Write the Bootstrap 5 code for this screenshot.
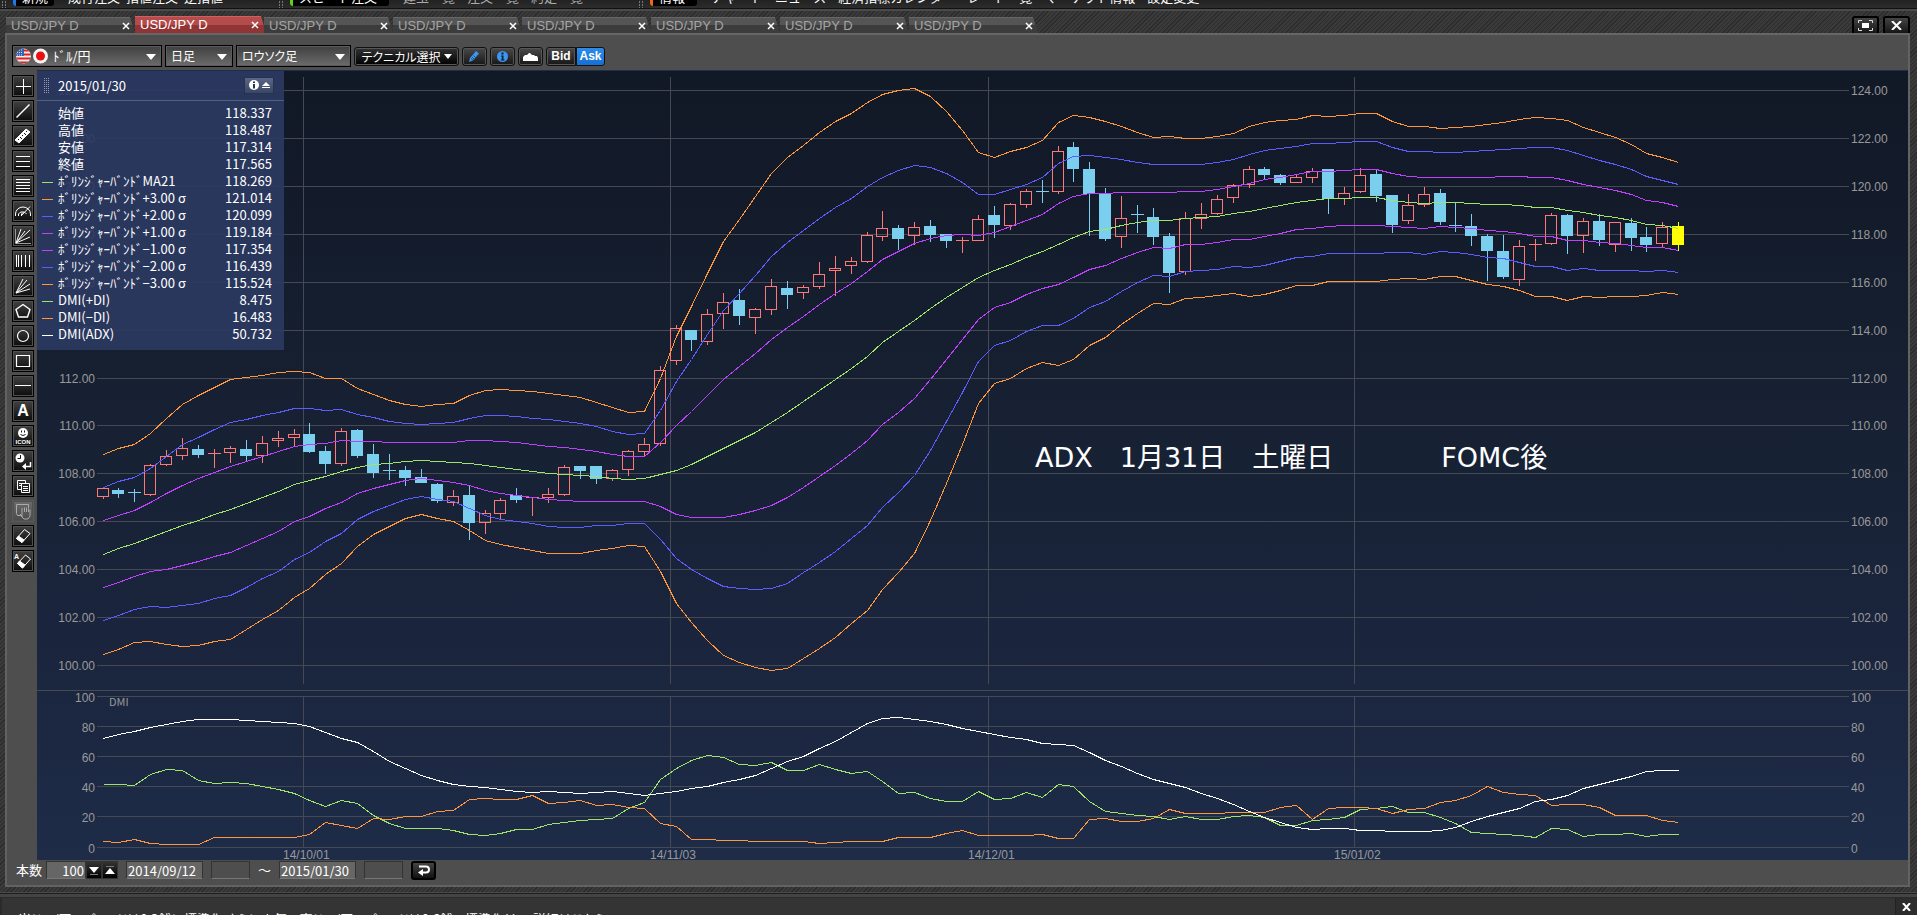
<!DOCTYPE html>
<html lang="ja">
<head>
<meta charset="utf-8">
<meta name="viewport" content="width=device-width, initial-scale=1">
<title>USD/JPY D</title>
<link href="https://cdn.jsdelivr.net/npm/bootstrap@5.3.0/dist/css/bootstrap.min.css" rel="stylesheet">
<style>
  :root { --ui: "Noto Sans CJK JP", "Liberation Sans", sans-serif; }
  body { font-family: var(--ui); font-size: 13px; line-height: 17px; color: #fff; background: #333; min-height: 600px; }
  .hatch { background: repeating-linear-gradient(135deg, #2c2c2c 0 1px, #3a3a3a 1px 3px); }
  .stretch { min-height: 0; }
  .groove { height: 3px; background: #4a4a4a; border-top: 1px solid #111; }

  .ticker { height: 8px; background: linear-gradient(#222, #2c2c2c); white-space: nowrap; }
  .ticker-cell { height: 19px; line-height: 18px; margin-top: -12px; }
  .ticker-cell > span { padding-right: 12px; }
  .ticker-key { background: #000; border-radius: 3px; padding: 0 6px; border-left: 3px solid #1c7be8; margin-right: 14px; }
  .ticker-key.key-green { border-color: #5fd01c; }
  .ticker-key.key-orange { border-color: #f0641e; }
  .ticker-grip { width: 6px; margin: 0 5px 0 2px; background: linear-gradient(#262626 50%, transparent 0) 0 0 / 3px 3px, linear-gradient(90deg, #777 50%, #262626 0) 0 0 / 3px 3px; }
  .ticker-cell.dim { color: #aaa; }
  .group-a { width: 277px; } .group-b { width: 360px; }
  .group-a .ticker-cell > span { padding-right: 6px; }

  .tabbar { height: 22px; padding: 0 7px 0 6px; }
  .chart-tab { width: 129px; height: 16px; padding: 0 5px 0 5px; font: 13px/15px "Liberation Sans", sans-serif; color: #a4a4a4;
    background: linear-gradient(#555 0 50%, #3c3c3c 50% 100%); border-top: 1px solid #666;
    clip-path: polygon(0 0, calc(100% - 5px) 0, 100% 100%, 0 100%); }
  .chart-tab.active { height: 17px; padding-right: 7px; color: #fff; background: linear-gradient(#b54c4c 0 50%, #8f3535 50% 100%); border-top-color: #d06060; width: 131px; margin-right: -2px; }
  .chart-tab a { color: inherit; text-decoration: none; }
  .tab-close { border: 0; background: none; padding: 0; width: 8px; height: 16px; display: flex; align-items: center; }
  .win-btn { width: 27px; height: 17px; padding: 0; border: 2px solid #000; border-bottom: 0; border-radius: 3px 3px 0 0;
    background: linear-gradient(#444, #161616); display: flex; align-items: center; justify-content: center; }

  .frame { margin: 0 7px 0 5px; background: #4e4e4e; border: 2px solid #626262; border-top-color: #666; }
  .toolbar { height: 35px; padding: 10px 0 3px 5px; gap: 3px; }
  .combo { position: relative; height: 22px; }
  .combo select { appearance: none; width: 100%; height: 22px; padding: 0 0 0 5px; border: 1px solid #000; outline: 0; border-radius: 0;
    color: #fff; background: linear-gradient(#3f3f3f, #6c6c6c); font: 12px/20px var(--ui); font-feature-settings: "palt"; box-shadow: inset 0 0 0 1px #5c5c5c; }
  .combo.pair select { padding-left: 40px; font-size: 13px; }
  .combo > svg { position: absolute; top: 0; pointer-events: none; }
  .combo > .caret { right: 6px; }
  .combo > .flags { left: 2px; }
  .w-pair { width: 150px; } .w-span { width: 68px; } .w-kind { width: 115px; }
  .tool-btn { height: 19px; padding: 0; border: 1px solid #111; border-radius: 3px; color: #fff; background: linear-gradient(#4a4a4a, #161616);
    display: inline-flex; align-items: center; justify-content: center; font: 13px/17px var(--ui); box-shadow: inset 0 0 0 1px #555; }
  .tool-btn.sq { width: 25px; }
  .tool-btn.tech { width: 105px; gap: 3px; font-size: 12px; background: linear-gradient(#333, #000); font-feature-settings: "palt"; }
  .price-side .tool-btn { font: bold 12px/17px "Liberation Sans", sans-serif; border-radius: 3px 0 0 3px; width: 30px; }
  .price-side .tool-btn + .tool-btn { border-radius: 0 3px 3px 0; width: 29px; background: linear-gradient(#2e8ce8, #1470d4); border-color: #111; box-shadow: none; }

  .side { width: 30px; padding: 5px 0 0 5px; gap: 3px; }
  .side button { width: 22px; height: 22px; padding: 0; border: 1px solid #000; background: linear-gradient(#414141, #0c0c0c); box-shadow: inset 0 0 0 1px #505050; display: block; flex: none; }
  .side button svg { display: block; margin: -1px; fill: none; stroke: #fff; stroke-width: 1; }
  .side button:disabled { background: linear-gradient(#6c6c6c, #4a4a4a); border-color: #5a5a5a; }
  .side button:disabled svg { stroke: #aaa; }

  .chart { background: linear-gradient(#111826, #172133 45%, #1a243c 70%, #1e2c48); border-top: 1px solid #1c2f4c; overflow: hidden; }
  .chart > svg { display: block; width: 100%; height: 100%; position: absolute; }
  .axis { font: 12px "Liberation Sans", sans-serif; fill: #999; }

  .info { position: absolute; left: 0; top: -1px; width: 247px; height: 280px; background: rgba(44, 58, 98, .92); }
  .info-head { height: 31px; padding: 0 10px 0 7px; border-bottom: 1px solid #53617f; }
  .grip { width: 6px; height: 16px; margin-right: 8px; background: linear-gradient(#2a375d 50%, transparent 0) 0 0 / 2px 2px, linear-gradient(90deg, #8e98ae 50%, #2a375d 0) 0 0 / 2px 2px; }
  .info-btn { width: 30px; height: 17px; padding: 0; border: 1px solid #27324e; background: linear-gradient(#5b6685, #394666); display: flex; align-items: center; justify-content: center; }
  .info table { width: 235px; margin-top: 3px; }
  .info th, .info td { padding: 0; height: 17px; line-height: 17px; font-weight: 400; white-space: nowrap; }
  .info th { padding-left: 5px; }
  .info td:last-child { text-align: right; }
  .key { width: 16px; }
  .key i { display: block; width: 11px; height: 1px; margin: 4px 0 0 5px; }
  .k-g { background: #9fe46a; } .k-o { background: #ff963c; } .k-b { background: #5c5cff; } .k-m { background: #c040ff; } .k-w { background: #fff; }

  .range { height: 25px; padding: 1px 0 0 9px; line-height: 17px; }
  .range input { height: 18px; padding: 0 1px; border: 1px solid #333; border-bottom-color: #777; border-radius: 0; color: #fff; background: #666; font: 13px/16px var(--ui); outline: 0; }
  .range .f-num { width: 40px; text-align: right; } .range .f-date { width: 77px; }
  .range .f-time { width: 39px; background: #4e4e4e; }
  .range .step { width: 16px; height: 18px; padding: 0; border: 1px solid #333; background: linear-gradient(#333, #000); display: flex; align-items: center; justify-content: center; }
  .range .go { width: 25px; height: 19px; padding: 0; border: 2px solid #000; border-radius: 3px; background: linear-gradient(#444, #111); display: flex; align-items: center; justify-content: center; }

  .under { height: 5px; }
  .groove-low { height: 5px; background: linear-gradient(#4a4a4a 0 1px, #1e1e1e 1px 2px, #444 2px 5px); }
  .news { height: 18px; background: #343434; border-top: 1px solid #2a2a2a; border-left: 2px solid #2a2a2a; overflow: hidden; }
  .news p { margin: 0; padding: 12px 0 0 16px; white-space: nowrap; font-feature-settings: "palt"; }
  .news button { width: 22px; height: 18px; padding: 0; border: 0; border-left: 1px solid #222; background: #2c2c2c; display: flex; align-items: center; justify-content: center; }
</style>
</head>
<body class="d-flex flex-column vh-100 overflow-hidden">

<header class="flex-shrink-0">
  <div class="ticker d-flex overflow-hidden">
    <div class="group-a d-flex">
      <i class="ticker-grip"></i>
      <div class="ticker-cell"><span class="ticker-key">新規</span><span>成行注文</span><span>指値注文</span><span>逆指値</span></div>
    </div>
    <div class="group-b d-flex">
      <i class="ticker-grip"></i>
      <div class="ticker-cell dim"><span class="ticker-key key-green text-white">スピード注文</span><span>建玉一覧</span><span>注文一覧</span><span>約定一覧</span></div>
    </div>
    <div class="d-flex">
      <i class="ticker-grip"></i>
      <div class="ticker-cell"><span class="ticker-key key-orange">情報</span><span>チャート</span><span>ニュース</span><span>経済指標カレンダー</span><span>レート一覧</span><span>マーケット情報</span><span>設定変更</span></div>
    </div>
  </div>
  <div class="groove"></div>
</header>

<main class="hatch stretch d-flex flex-column flex-fill">
  <div class="tabbar d-flex align-items-end justify-content-between flex-shrink-0">
    <nav class="d-flex align-items-end" id="tabs" aria-label="チャート"></nav>
    <div class="d-flex gap-1 align-self-end">
      <button class="win-btn" aria-label="最大化"><svg width="15" height="11" viewBox="0 0 15 11" fill="none" stroke="#ddd"><path d="M.5 3V.5H4M11 .5h3.5V3M14.500 8v2.500H11M4 10.500H.5V8"/><path d="M4 3h7v5H4z" fill="#fff" stroke="none"/></svg></button>
      <button class="win-btn" aria-label="閉じる"><svg width="11" height="9" viewBox="0 0 11 9" stroke="#fff" stroke-width="2"><path d="M1 0l9 9M10 0L1 9"/></svg></button>
    </div>
  </div>

  <section class="frame stretch d-flex flex-column flex-fill">
    <div class="toolbar d-flex align-items-center flex-shrink-0">
      <div class="combo pair w-pair">
        <select aria-label="通貨ペア"><option>ﾄﾞﾙ/円</option></select>
        <svg class="flags" width="36" height="22" viewBox="0 0 36 22">
          <clipPath id="us"><circle cx="9.500" cy="11" r="7.500"/></clipPath>
          <g clip-path="url(#us)"><path d="M0 0h20v22H0z" fill="#eee"/><path d="M0 5.500h20M0 9.500h20M0 13.500h20M0 17.500h20" stroke="#d22" stroke-width="2"/><path d="M0 2h10v9H0z" fill="#3563b4"/><path d="M3 5h6M3 7.500h6M3 10h6" stroke="#cfe0ff" stroke-dasharray="1 1"/></g>
          <circle cx="26.500" cy="11" r="7.500" fill="#f4f4f4"/><circle cx="26.500" cy="11" r="4.500" fill="#e81010"/>
        </svg>
        <svg class="caret" width="10" height="22" viewBox="0 0 10 22"><path d="M0 9h10l-5 6z" fill="#fff"/></svg>
      </div>
      <div class="combo w-span">
        <select aria-label="足種"><option>日足</option></select>
        <svg class="caret" width="10" height="22" viewBox="0 0 10 22"><path d="M0 9h10l-5 6z" fill="#fff"/></svg>
      </div>
      <div class="combo w-kind">
        <select aria-label="チャート種別"><option>ロウソク足</option></select>
        <svg class="caret" width="10" height="22" viewBox="0 0 10 22"><path d="M0 9h10l-5 6z" fill="#fff"/></svg>
      </div>
      <button class="tool-btn tech">テクニカル選択<svg width="8" height="5" viewBox="0 0 8 5"><path d="M0 0h8L4 5z" fill="#fff"/></svg></button>
      <button class="tool-btn sq" aria-label="描画"><svg width="13" height="13" viewBox="0 0 13 13"><path d="M1 12l1-4 6-7 3 2.500-6 7z" fill="#3d96f0"/><path d="M3 8.500l2 1.700M4 7l2 2M5.500 5.500l2 2" stroke="#0c3c78" stroke-width=".7"/></svg></button>
      <button class="tool-btn sq" aria-label="情報"><svg width="13" height="13" viewBox="0 0 13 13"><circle cx="6.500" cy="6.500" r="5.500" fill="#3d96f0"/><path d="M5.500 2.500h2v2h-2zM5 5.500h2.500v4h1v1H4.800v-1h1v-3H5z" fill="#0d1c30"/></svg></button>
      <button class="tool-btn sq" aria-label="エリア"><svg width="15" height="9" viewBox="0 0 15 9"><path d="M0 9V5l2-2h2l2-2h1l2 2h2l1 1h2l1 2v3z" fill="#fff"/></svg></button>
      <div class="price-side d-flex"><button class="tool-btn">Bid</button><button class="tool-btn">Ask</button></div>
    </div>

    <div class="stretch d-flex flex-fill">
      <aside class="side d-flex flex-column flex-shrink-0">
        <button aria-label="十字線"><svg width="22" height="22"><path d="M11.500 4v15M4 11.500h15"/></svg></button>
        <button aria-label="直線"><svg width="22" height="22"><path d="M4.500 17.500l13-13" stroke-width="1.500"/></svg></button>
        <button aria-label="定規"><svg width="22" height="22"><path d="M3 15L14 4l4 3L7 18z" fill="#fff"/><path d="M6 14l1 1M8 12l2 2M10 10l1 1M12 8l2 2M14 6l1 1" stroke="#111"/></svg></button>
        <button aria-label="平行線3"><svg width="22" height="22"><path d="M4 6.500h14M4 11.500h14M4 16.500h14"/></svg></button>
        <button aria-label="平行線5"><svg width="22" height="22"><path d="M4 4.500h14M4 7.500h14M4 10.500h14M4 13.500h14M4 16.500h14"/></svg></button>
        <button aria-label="アーク"><svg width="22" height="22"><path d="M3.500 16v-2a7.500 7 0 0 1 15 0v2M6.500 16v-2a4.500 4 0 0 1 8 0M9 16l9-9.500M9.500 16v-2l2-2"/></svg></button>
        <button aria-label="ファン"><svg width="22" height="22"><path d="M3.500 4v14.500H19" stroke="#999"/><path d="M4 18L9 4M4 18l9-12M4 18L18 5M4 18l14-6"/></svg></button>
        <button aria-label="縦線"><svg width="22" height="22"><path d="M4.500 5v12M6.500 5v12M9.500 5v12M13.500 5v12M17.500 5v12"/></svg></button>
        <button aria-label="放射線"><svg width="22" height="22"><path d="M4 18L11 4M4 18L15 5M4 18l14-9M4 18l14-4"/></svg></button>
        <button aria-label="五角形"><svg width="22" height="22"><path d="M11 4.500l7 5-2.500 7.500h-9L4 9.500z" stroke-width="1.400"/></svg></button>
        <button aria-label="円"><svg width="22" height="22"><circle cx="11" cy="11" r="5.500" stroke-width="1.200"/></svg></button>
        <button aria-label="四角"><svg width="22" height="22"><path d="M4.500 5.500h13v11h-13z" stroke-width="1.200"/></svg></button>
        <button aria-label="水平線"><svg width="22" height="22"><path d="M3 10.500h16"/></svg></button>
        <button aria-label="文字"><svg width="22" height="22"><text x="11" y="16" text-anchor="middle" font-family="Liberation Sans, sans-serif" font-weight="bold" font-size="16" fill="#fff" stroke="none">A</text></svg></button>
        <button aria-label="アイコン"><svg width="22" height="22"><circle cx="11" cy="8" r="5" fill="#fff" stroke="none"/><path d="M9.500 5.500v2M12.500 5.500v2M8.500 9.500q2.500 2 5 0" stroke="#111"/><text x="11" y="19" text-anchor="middle" font-family="Liberation Sans, sans-serif" font-weight="bold" font-size="6" fill="#fff" stroke="none">ICON</text></svg></button>
        <button aria-label="時間を戻す"><svg width="22" height="22"><circle cx="8" cy="8" r="4.500" fill="#fff" stroke="none"/><path d="M8.500 5v3.500H5.500" stroke="#111"/><path d="M18.500 12v4.500H13" stroke-width="1.500"/><path d="M14 13v7l-4-3.500z" fill="#fff" stroke="none"/></svg></button>
        <button aria-label="コピー"><svg width="22" height="22"><path d="M5.500 5.500h8v9h-8zM7 8.500h4M7 10.500h3"/><path d="M9.500 8.500h8v9h-8z" fill="#222"/><path d="M11 11.500h5M11 13.500h5M11 15.500h5"/></svg></button>
        <button aria-label="貼り付け" disabled><svg width="22" height="22"><path d="M10 15.500H5.500l-1-2v-9h12V8M10 8v9l-2-3M10 17l2 2h4l2-3V9.500M12.500 12V7.500M14.500 12V7.500M16.500 12V8.500"/></svg></button>
        <button aria-label="消去"><svg width="22" height="22"><path d="M4.500 13.500l8-9 5.500 4-8 9z"/><path d="M4.500 13.500l2-2.500 5.500 4-2 2.500z" fill="#fff"/></svg></button>
        <button aria-label="全消去"><svg width="22" height="22"><text x="2" y="9" font-family="Liberation Sans, sans-serif" font-weight="bold" font-size="7" fill="#fff" stroke="none">A</text><path d="M5.500 13.500l8-8.500 5 4-8 9z"/><path d="M5.500 13.500l2-2.500 5.500 4-2.500 3z" fill="#fff"/></svg></button>
      </aside>

      <div class="chart position-relative flex-fill" id="chart">
        <svg id="plot" role="img" aria-label="USD/JPY 日足とDMI"></svg>
        <div class="info">
          <div class="info-head d-flex align-items-center">
            <i class="grip"></i><span class="flex-fill">2015/01/30</span>
            <button class="info-btn" aria-label="表示切替"><svg width="22" height="12" viewBox="0 0 22 12"><circle cx="6" cy="6" r="5" fill="#fff"/><path d="M5 2.500h2v1.500H5zM5 5h2v4.500H5z" fill="#27324e"/><path d="M14 7h8l-4-4zM14 8h8v1h-8z" fill="#fff"/></svg></button>
          </div>
          <table><tbody>
            <tr><td class="key"></td><th scope="row">始値</th><td>118.337</td></tr>
            <tr><td class="key"></td><th scope="row">高値</th><td>118.487</td></tr>
            <tr><td class="key"></td><th scope="row">安値</th><td>117.314</td></tr>
            <tr><td class="key"></td><th scope="row">終値</th><td>117.565</td></tr>
            <tr><td class="key"><i class="k-g"></i></td><th scope="row">ﾎﾞﾘﾝｼﾞｬｰﾊﾞﾝﾄﾞMA21</th><td>118.269</td></tr>
            <tr><td class="key"><i class="k-o"></i></td><th scope="row">ﾎﾞﾘﾝｼﾞｬｰﾊﾞﾝﾄﾞ+3.00 σ</th><td>121.014</td></tr>
            <tr><td class="key"><i class="k-b"></i></td><th scope="row">ﾎﾞﾘﾝｼﾞｬｰﾊﾞﾝﾄﾞ+2.00 σ</th><td>120.099</td></tr>
            <tr><td class="key"><i class="k-m"></i></td><th scope="row">ﾎﾞﾘﾝｼﾞｬｰﾊﾞﾝﾄﾞ+1.00 σ</th><td>119.184</td></tr>
            <tr><td class="key"><i class="k-m"></i></td><th scope="row">ﾎﾞﾘﾝｼﾞｬｰﾊﾞﾝﾄﾞ−1.00 σ</th><td>117.354</td></tr>
            <tr><td class="key"><i class="k-b"></i></td><th scope="row">ﾎﾞﾘﾝｼﾞｬｰﾊﾞﾝﾄﾞ−2.00 σ</th><td>116.439</td></tr>
            <tr><td class="key"><i class="k-o"></i></td><th scope="row">ﾎﾞﾘﾝｼﾞｬｰﾊﾞﾝﾄﾞ−3.00 σ</th><td>115.524</td></tr>
            <tr><td class="key"><i class="k-g"></i></td><th scope="row">DMI(+DI)</th><td>8.475</td></tr>
            <tr><td class="key"><i class="k-o"></i></td><th scope="row">DMI(−DI)</th><td>16.483</td></tr>
            <tr><td class="key"><i class="k-w"></i></td><th scope="row">DMI(ADX)</th><td>50.732</td></tr>
          </tbody></table>
        </div>
      </div>
    </div>

    <form class="range d-flex align-items-start flex-shrink-0" onsubmit="return false">
      <label for="bars" class="me-1">本数</label>
      <input id="bars" class="f-num" value="100">
      <button type="button" class="step" aria-label="減らす"><svg width="10" height="9" viewBox="0 0 10 9"><path d="M0 1h10L5 7z" fill="#fff"/><path d="M1 8.500h8" stroke="#777"/></svg></button>
      <button type="button" class="step me-2" aria-label="増やす"><svg width="10" height="9" viewBox="0 0 10 9"><path d="M0 8h10L5 2z" fill="#fff"/><path d="M1 .5h8" stroke="#777"/></svg></button>
      <input class="f-date me-2" aria-label="開始日" value="2014/09/12">
      <input class="f-time me-2" aria-label="開始時刻">
      <span class="me-2">～</span>
      <input class="f-date me-2" aria-label="終了日" value="2015/01/30">
      <input class="f-time me-2" aria-label="終了時刻">
      <button class="go" aria-label="再表示"><svg width="14" height="11" viewBox="0 0 14 11"><path d="M2 1.500h7a2.800 2.800 0 0 1 0 6H5" fill="none" stroke="#fff" stroke-width="2"/><path d="M6 4v7L1 7.500z" fill="#fff"/></svg></button>
    </form>
  </section>
  <div class="under flex-shrink-0"></div>
</main>

<footer class="flex-shrink-0">
  <div class="groove-low"></div>
  <div class="news d-flex justify-content-between">
    <p>米ドル/円スプレッドは0.3銭に標準化 さらに人気の豪ドル/円スプレッドは0.6銭で標準化！！ …詳細はこちら</p>
    <button aria-label="閉じる"><svg width="9" height="8" viewBox="0 0 9 8" stroke="#fff" stroke-width="2"><path d="M1 0l7 8M8 0L1 8"/></svg></button>
  </div>
</footer>

<script src="https://cdn.jsdelivr.net/npm/bootstrap@5.3.0/dist/js/bootstrap.bundle.min.js"></script>
<script>
  document.getElementById('tabs').innerHTML = Array.from({ length: 8 }, (_, i) =>
    `<div class="chart-tab d-flex justify-content-between ${i === 1 ? 'active' : ''}"><a href="#">USD/JPY D</a>` +
    `<button class="tab-close" aria-label="閉じる"><svg width="8" height="8" viewBox="0 0 8 8" stroke="#fff" stroke-width="1.500"><path d="M1 1l6 6M7 1L1 7"/></svg></button></div>`).join('');

  // Candles: direction, body top, body bottom, high, low (chart units, y down)
  const candles = `u 488 497 488 499,d 490 494 488 498,d 492 492 489 502,u 465 495 464 496,u 456 465 450 466,u 448 456 438 460,d 449 455 445 458,u 453 453 449 468,u 448 453 446 463,d 449 456 440 461
,u 443 456 436 463,u 438 441 431 447,u 434 438 429 446,d 434 452 423 453,d 451 464 446 474,u 431 464 428 466,d 430 456 429 458,d 454 473 444 478,d 470 470 454 480,d 470 478 466 486
,d 477 483 469 483,d 484 501 483 503,u 496 503 490 506,d 495 523 486 540,u 513 523 510 534,u 500 514 498 519,d 495 500 488 503,u 497 497 497 516,u 494 498 488 503,u 467 495 465 496
,d 466 471 466 479,d 466 479 466 484,u 470 479 469 481,u 451 470 450 476,u 444 452 438 456,u 370 444 366 446,u 328 361 325 365,d 330 340 330 351,u 314 342 309 345,u 302 314 293 329
,d 300 316 289 325,u 309 318 308 334,u 286 310 279 315,d 288 295 281 309,u 287 293 285 299,u 274 287 262 289,u 268 271 256 296,u 261 266 257 274,u 235 262 232 263,u 228 237 211 241
,d 228 239 225 250,u 227 236 222 245,d 226 235 220 242,d 234 241 234 248,u 240 240 237 253,u 219 241 215 241,d 215 225 206 238,u 204 226 203 230,u 191 205 189 208,d 191 191 180 203
,u 151 192 146 194,d 147 169 142 182,d 169 194 162 236,d 194 239 188 241,u 218 237 196 248,d 214 214 205 233,d 217 237 208 245,d 236 273 233 293,u 218 272 212 275,u 214 219 203 229
,u 199 214 195 215,u 185 198 184 203,u 169 185 166 188,d 169 175 167 179,d 175 183 174 185,u 177 183 175 183,u 171 178 168 183,d 169 199 169 214,u 193 199 187 205,u 175 192 168 193
,d 174 196 170 202,d 195 225 195 233,u 205 221 194 224,u 194 205 187 207,d 193 222 189 225,d 225 225 203 232,d 226 236 214 246,d 236 251 234 281,d 251 277 235 279,u 246 280 240 286
,u 244 244 239 261,u 215 244 213 245,d 215 236 214 254,u 221 236 218 253,d 221 240 214 246,u 222 245 222 252,d 223 238 218 251,d 237 245 227 252,u 227 244 222 248,n 226 245 222 251`
    .split(',').map(s => { const [k, ...v] = s.trim().split(' '); return [k, ...v.map(Number)]; });
  const list = s => s.trim().split(/\s+/).map(Number);
  const ma = list(`554.3 548.7 543.3 537.3 531.7 525.3 520.3 514.3 509.3 503.3 497.3 491.7 484.3 480.3 476.3 471.3 467.3 464.7 463.3 461.3 460.3 461.3 462.3 463 465.3
    467.3 469 471 473 474.3 475.3 476.3 478 479 478.5 474.7 470 464.5 456.7 448.7 440.7 432.3 422.3 412.7 401.7 390.7 379.3 368 356 342.3
    331.7 320.7 308.7 297.7 287.3 277.7 270.3 264.7 257.7 251.7 244.3 237.3 231.7 229.3 225.3 222.7 220.3 220.3 218.3 217.7 216 213.3 211.3 208.3 205.3
    202.3 200.3 198.7 198.3 197.3 197.3 200.3 202.3 203 202.3 202.3 203.3 204.3 204.3 205.3 207 207.3 210.3 212.3 215.3 217.3 220.3 224.3 225.3 228.3`);
  const top3 = list(`454.3 448.3 444.3 433.5 418.5 404.5 395.5 387.5 379.5 377.5 375 372.5 371.3 372.3 378.3 378.7 388.5 394.5 400.5 404.3 406.3 404.5 403 395.5 390.5
    389.7 390.5 391.7 393 395 397.3 402 407.5 412.3 411 378 336.7 306.7 273.3 241.5 219.3 196.7 173.7 157 145 132.7 121.5 113 102 94.7
    90.5 88.3 96.7 111.7 130 152.3 157.3 151.3 147.3 140.5 122.7 115.5 117.5 121.5 126.3 132.3 137.3 136.3 138.3 138.3 136.3 133.3 126.5 122.3 120.5
    119.3 115.3 116.3 115.3 113.3 113.3 121.3 126.3 126.3 128.3 127.7 126.3 124.3 122.3 119.7 117.3 118.3 120.3 127.7 132.7 137.7 144.3 153.3 157.7 162.3`);
  const adx = list(`738.7 734.7 731.3 727.3 724.3 721.7 719.7 719.3 719.3 720.3 721.3 722.3 723.3 726.7 732.7 738.3 742 751 761.3 768.7 775.3 780.3 784 786.3 787.3
    789.3 791.3 792.3 791.3 792.7 793.3 792 791.3 793.3 795.3 793.7 791.7 788.7 786.3 782.7 779 775 768.3 761.7 756 748 741 732 723 718.7
    717.3 719.3 721.3 724.3 728 731.3 734.3 737 739.3 743 744.3 745.7 752.3 760 766.7 773 779.3 783.3 787.7 793 798.7 804.7 811 817.7 822.3
    827 829.3 828.7 828.7 830.3 830.3 831.3 831.3 831.3 830.3 827.7 821.5 816 812.3 808.3 801.7 799.7 795.3 788.7 784 780.3 776.3 771.3 770.3 770.3`);
  const plusDI = list(`784.3 784.3 785.7 774.7 769.3 770.7 780 783.3 782.3 783 786.7 789 793.3 800.3 806.3 800.3 803.3 815 823.3 828.3 828.3 828.3 830.3 834 835.3
    833.3 829.3 829.3 824.3 822.3 820.3 819.3 818 808 802.7 779.3 768 760.3 755.3 757.3 764.3 765.3 762.3 770.3 770.3 764.3 769.3 773.3 771.3 781.7
    793 792.3 798.3 801.3 801.3 791.3 799.3 798 792.3 797.3 784.3 786.7 801 811.3 813.7 815.3 816.7 819.3 816.3 819.3 819.3 816.7 815.3 817 825.3
    825.3 820.7 819.3 817 809.3 808.7 806.3 812.3 812.3 817 823 832.3 833.3 834.3 835.3 837.3 828.3 829.3 836.3 834.3 834.3 833.3 836.3 834.3 834.3`);
  const minusDI = list(`841.3 842.3 839.3 843 844.3 844.3 844.3 837.3 837.3 837.3 837.3 837.3 837.3 834.3 822.3 825.3 828.3 818.3 819.3 816.7 816.3 811.7 810.3 799.7 798.5
    799.3 799.3 795.3 803.3 802.3 800 805.3 804.3 807 808.7 823.3 826.7 839.3 839.3 840.3 840.3 841.3 841.3 841.3 841.3 843.3 842 841.3 841.3 841.3
    837.3 837.3 837.3 833.7 830.3 835.3 835.3 835.3 835.3 834.3 838.3 838.3 819.7 818.3 821.3 821.3 818 809.3 813.3 813.3 813 812.3 812.3 812.3 807.7
    805.3 819.3 808.3 807.3 807.3 808.7 813.7 809.3 808 802.7 800.7 795.5 786.3 792.3 794.3 795.3 805.3 804.3 804.3 807.3 815.3 815.3 815.3 820.3 822.3`);

  const ORIGIN = 71, BASE_H = 789, BASE_W = 1871;
  const priceRows = [[124, 90], [122, 138], [120, 186], [118, 234], [116, 282], [114, 330], [112, 378], [110, 425], [108, 473], [106, 521], [104, 569], [102, 617], [100, 665]];
  const dmiRows = [[100, 696], [80, 726], [60, 756], [40, 786], [20, 816], [0, 847]];
  const months = [[13, '14/10/01'], [36, '14/11/03'], [56, '14/12/01'], [79, '15/01/02']];
  const plot = document.getElementById('plot'), chart = document.getElementById('chart');

  function draw() {
    const W = chart.clientWidth, H = chart.clientHeight;
    const right = W - 59, kx = (right - 60) / (BASE_W - 119);
    const Y = y => Math.round((y - ORIGIN) * H / BASE_H);
    const X = i => Math.floor(60 + (6 + i * 15.917) * kx);
    const half = Math.max(2, Math.round(6 * kx));
    const out = [];
    const line = (x1, y1, x2, y2, c) => out.push(`<path d="M${x1} ${y1}L${x2} ${y2}" stroke="${c}"/>`);
    const grid = '#454954';
    for (const [v, y] of priceRows) {
      line(60, Y(y) + .5, right, Y(y) + .5, grid);
      out.push(`<text class="axis" x="58" y="${Y(y) + 5}" text-anchor="end">${v}.00</text><text class="axis" x="${right + 2}" y="${Y(y) + 5}">${v}.00</text>`);
    }
    for (const [v, y] of dmiRows) {
      line(60, Y(y) + .5, right, Y(y) + .5, grid);
      out.push(`<text class="axis" x="58" y="${Y(y) + 6}" text-anchor="end">${v}</text><text class="axis" x="${right + 2}" y="${Y(y) + 6}">${v}</text>`);
    }
    line(0, Y(690) + .5, W, Y(690) + .5, grid);
    for (const [i, t] of months) {
      const x = X(i) - half + .5;
      line(x, Y(77), x, Y(684), grid);
      line(x, Y(696), x, Y(847), grid);
      out.push(`<text class="axis" x="${x - 20.5}" y="${H - 1}">${t}</text>`);
    }
    out.push(`<text class="axis" style="font:11px 'Noto Sans CJK JP',sans-serif" x="72" y="${Y(706)}">DMI</text>`);

    candles.forEach(([k, t, b, h, l], i) => {
      const x = X(i), c = { u: '#ff7878', d: '#7acfef', n: '#ffff00' }[k];
      if (t === b) {
        line(x - half, Y(t) + .5, x + half + 1, Y(t) + .5, c);
        line(x + .5, Y(h), x + .5, Y(l), c);
      } else if (k === 'u') {
        line(x + .5, Y(h), x + .5, Y(t), c);
        line(x + .5, Y(b), x + .5, Y(l), c);
        out.push(`<rect x="${x - half + .5}" y="${Y(t) + .5}" width="${2 * half - 1}" height="${Math.max(1, Y(b) - Y(t) - 1)}" fill="none" stroke="${c}"/>`);
      } else {
        line(x + .5, Y(h), x + .5, Y(l), c);
        out.push(`<rect x="${x - half}" y="${Y(t)}" width="${2 * half}" height="${Y(b) - Y(t)}" fill="${c}"/>`);
      }
    });

    // Points sit on pixel centres so that flat stretches stay one pixel thick
    const curve = (vals, c) => out.push(`<polyline fill="none" stroke="${c}" points="${vals.map((v, i) => (X(i) + .5) + ',' + (Math.floor((v - ORIGIN) * H / BASE_H) + .5)).join(' ')}"/>`);
    const band = k => ma.map((m, i) => m + (top3[i] - m) * k / 3);
    [[3, '#ff963c'], [-3, '#ff963c'], [2, '#5c5cff'], [-2, '#5c5cff'], [1, '#c040ff'], [-1, '#c040ff'], [0, '#9fe46a']].forEach(([k, c]) => curve(band(k), c));
    curve(plusDI, '#9fe46a'); curve(minusDI, '#ff963c'); curve(adx, '#ffffff');

    out.push(`<text x="${60 + Math.round(938 * kx)}" y="${Y(467)}" xml:space="preserve" fill="#fff" style="font:27px 'DejaVu Sans','Noto Sans CJK JP',sans-serif">ADX　1月31日　土曜日　　　　FOMC後</text>`);
    plot.innerHTML = `<g shape-rendering="crispEdges">${out.join('')}</g>`;
  }
  draw();
  addEventListener('resize', draw);
</script>
</body>
</html>
